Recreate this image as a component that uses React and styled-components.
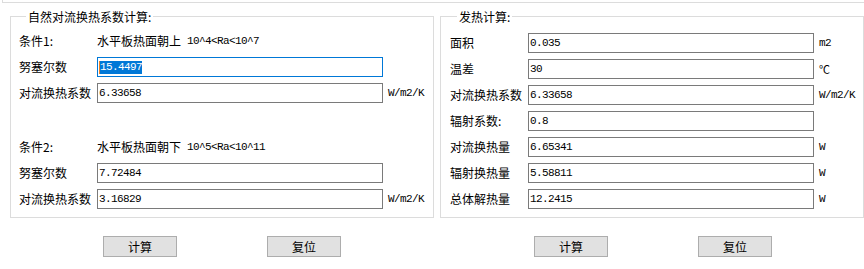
import React from 'react';
import styled, { createGlobalStyle } from 'styled-components';

const GlobalStyle = createGlobalStyle`
  html, body {
    margin: 0;
    padding: 0;
    background: #ffffff;
  }
  body {
    font-family: "Noto Sans CJK SC", "Noto Sans", sans-serif;
    font-size: 12px;
    color: #000000;
  }
`;

const Page = styled.div`
  width: 864px;
  height: 269px;
  overflow: hidden;
`;

const TopFrame = styled.div`
  margin-left: 2px;
  height: 2px;
  border-left: 1px solid #dcdcdc;
  border-bottom: 1px solid #dcdcdc;
`;

const Columns = styled.div`
  display: flex;
  gap: 6px;
  padding-left: 10px;
  margin-top: 6px;
`;

const Column = styled.div`
  display: flex;
  flex-direction: column;
  width: 424px;
`;

const Group = styled.fieldset`
  margin: 0;
  box-sizing: border-box;
  width: 424px;
  border: 1px solid #dcdcdc;
  padding: ${p => p.$top}px 0 8px ${p => p.$left}px;
  min-inline-size: 0;
`;

const Legend = styled.legend`
  margin-left: 7px;
  padding: 0 2px;
  font-size: 12px;
  line-height: 15px;
`;

const Row = styled.div`
  display: grid;
  grid-template-columns: 78px 286px auto;
  align-items: center;
  height: 20px;
  margin-top: ${p => p.$gap ?? 6}px;
  &:first-of-type {
    margin-top: 0;
  }
`;

const Label = styled.span`
  font-size: 12px;
  line-height: 14px;
  white-space: nowrap;
`;

const Desc = styled.span`
  grid-column: 2 / 4;
  display: flex;
  align-items: center;
  font-size: 12px;
  line-height: 14px;
  white-space: nowrap;
`;

const Range = styled.span`
  margin-left: 6px;
  font-family: "Liberation Mono", "Noto Sans CJK SC", monospace;
  font-size: 11px;
  letter-spacing: -0.6px;
`;

const TextBox = styled.div`
  box-sizing: border-box;
  height: 20px;
  border: 1px solid ${p => (p.$focused ? '#0078d7' : '#7a7a7a')};
  padding-left: 1px;
  display: flex;
  align-items: center;
  font-family: "Liberation Mono", monospace;
  font-size: 11px;
  letter-spacing: -0.6px;
  background: #ffffff;
`;

const Selected = styled.span`
  display: inline-block;
  height: 13px;
  line-height: 13px;
  background: #0078d7;
  color: #ffffff;
  border-left: 1px solid #f08020;
`;

const Unit = styled.span`
  margin-left: 5px;
  font-family: "Liberation Mono", "Noto Sans CJK SC", monospace;
  font-size: 11px;
  letter-spacing: -0.6px;
  white-space: nowrap;
`;

const ButtonBar = styled.div`
  display: flex;
  gap: 90px;
  margin-top: 18px;
  padding-left: ${p => p.$left}px;
`;

const Button = styled.button`
  box-sizing: border-box;
  width: 74px;
  height: 21px;
  padding: 0;
  background: #e1e1e1;
  border: 1px solid #adadad;
  border-radius: 0;
  font-family: "Noto Sans CJK SC", sans-serif;
  font-size: 12px;
  line-height: 14px;
  color: #000000;
`;

function Field({ label, value, unit, focused, gap }) {
  return (
    <Row $gap={gap}>
      <Label>{label}</Label>
      <TextBox $focused={focused}>
        {focused ? <Selected>{value}</Selected> : value}
      </TextBox>
      {unit ? <Unit>{unit}</Unit> : <span />}
    </Row>
  );
}

function Condition({ label, text, range, gap }) {
  return (
    <Row $gap={gap}>
      <Label>{label}</Label>
      <Desc>
        {text}
        <Range>{range}</Range>
      </Desc>
    </Row>
  );
}

const heatRows = [
  { label: '面积', value: '0.035', unit: 'm2' },
  { label: '温差', value: '30', unit: '℃' },
  { label: '对流换热系数', value: '6.33658', unit: 'W/m2/K' },
  { label: '辐射系数:', value: '0.8' },
  { label: '对流换热量', value: '6.65341', unit: 'W' },
  { label: '辐射换热量', value: '5.58811', unit: 'W' },
  { label: '总体解热量', value: '12.2415', unit: 'W' },
];

export default function App() {
  return (
    <Page>
      <GlobalStyle />
      <TopFrame />
      <Columns>
        <Column>
          <Group $top={7} $left={8}>
            <Legend>自然对流换热系数计算:</Legend>
            <Condition label="条件1:" text="水平板热面朝上" range="10^4<Ra<10^7" />
            <Field label="努塞尔数" value="15.4497" focused />
            <Field label="对流换热系数" value="6.33658" unit="W/m2/K" />
            <Condition label="条件2:" text="水平板热面朝下" range="10^5<Ra<10^11" gap={34} />
            <Field label="努塞尔数" value="7.72484" />
            <Field label="对流换热系数" value="3.16829" unit="W/m2/K" />
          </Group>
          <ButtonBar $left={93}>
            <Button>计算</Button>
            <Button>复位</Button>
          </ButtonBar>
        </Column>
        <Column>
          <Group $top={9} $left={9}>
            <Legend>发热计算:</Legend>
            {heatRows.map((r, i) => (
              <Field key={i} label={r.label} value={r.value} unit={r.unit} />
            ))}
          </Group>
          <ButtonBar $left={94}>
            <Button>计算</Button>
            <Button>复位</Button>
          </ButtonBar>
        </Column>
      </Columns>
    </Page>
  );
}
